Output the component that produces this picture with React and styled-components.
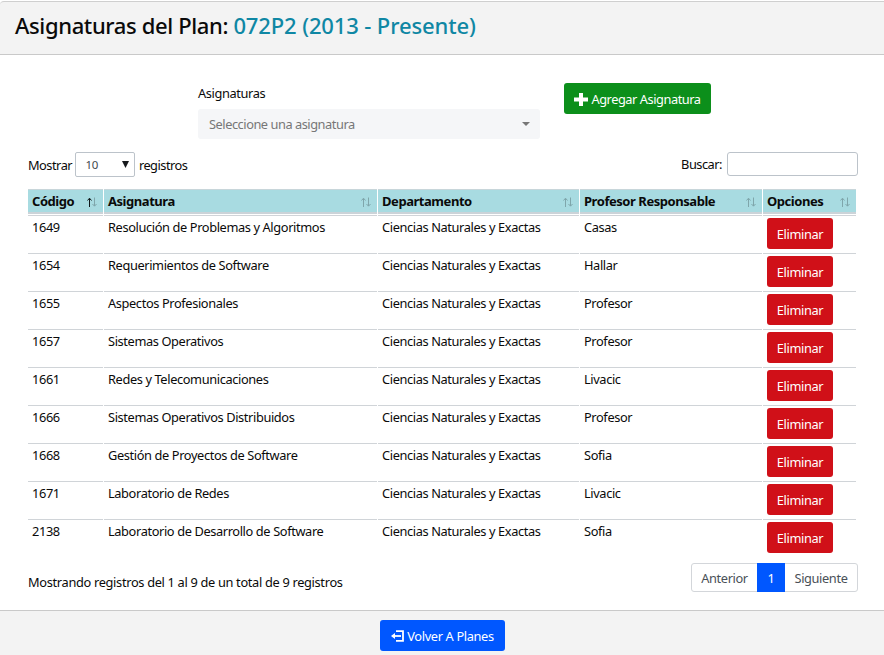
import React from "react";
import styled, { createGlobalStyle } from "styled-components";

const GlobalStyle = createGlobalStyle`
  *, *::before, *::after { box-sizing: border-box; }
  body {
    margin: 0;
    background: #fff;
    color: #0a0a0a;
    font-family: "Noto Sans", "Open Sans", sans-serif;
    font-size: 12.8px;
    line-height: 20px;
    letter-spacing: -0.38px;
  }
  button, input { font: inherit; letter-spacing: inherit; }
`;

const Card = styled.div`
  display: flex;
  flex-direction: column;
  height: 655px;
  padding-top: 1px;
  overflow: hidden;
`;

const CardHeader = styled.header`
  height: 54px;
  padding: 8px 0 0 15px;
  background: #f3f3f3;
  border-top: 1px solid #cfcfcf;
  border-bottom: 1px solid #c9c9c9;
  border-top-left-radius: 4px;
`;

const Title = styled.h1`
  margin: 0;
  font-size: 22px;
  line-height: 30px;
  font-weight: 500;
  letter-spacing: -0.37px;
  color: #0a0a0a;
  white-space: nowrap;
`;

const PlanName = styled.span`
  letter-spacing: -0.12px;
  color: #0f87a4;
`;

const CardBody = styled.main`
  height: 555px;
  padding: 28px 26px 0 28px;
`;

const AddForm = styled.div`
  display: flex;
  align-items: flex-start;
  gap: 24px;
  padding-left: 170px;
  height: 69px;
`;

const Field = styled.div`
  display: flex;
  flex-direction: column;
  gap: 6px;
  width: 342px;
`;

const SubjectSelect = styled.div`
  display: flex;
  align-items: center;
  justify-content: space-between;
  height: 30px;
  padding: 0 10px 0 11px;
  border-radius: 3px;
  background: #f5f6f8;
  color: #777;
  letter-spacing: -0.46px;
`;

const Button = styled.button`
  display: inline-flex;
  align-items: center;
  justify-content: center;
  gap: 3px;
  flex: none;
  width: ${(p) => p.$width}px;
  height: 31px;
  padding: 1px 0 0;
  border: 0;
  border-radius: 3px;
  background: ${(p) => p.$color};
  color: #fff;
  letter-spacing: ${(p) => p.$tracking || -0.35}px;
  white-space: nowrap;
`;

const Toolbar = styled.div`
  display: flex;
  justify-content: space-between;
  align-items: flex-start;
  height: 37px;
`;

const ToolLabel = styled.label`
  display: flex;
  align-items: center;
  gap: ${(p) => p.$gap || 4}px;
  height: ${(p) => p.$height}px;
  letter-spacing: -0.5px;
`;

const LengthSelect = styled.span`
  display: flex;
  align-items: center;
  justify-content: space-between;
  width: 60px;
  height: 25px;
  padding: 1px 5px 0 9px;
  border: 1px solid #bcc3ca;
  border-radius: 2px;
  color: #444a50;
  font-size: 11.5px;
  letter-spacing: -0.2px;

  svg {
    margin-bottom: 2px;
  }
`;

const SearchInput = styled.input`
  width: 131px;
  height: 24px;
  border: 1px solid #bcc3ca;
  border-radius: 3px;
  background: #fff;
  outline: none;
`;

const Table = styled.table`
  display: block;
  width: 828px;
`;

const TableHead = styled.thead`
  display: block;
  margin-bottom: 1px;
`;

const TableBody = styled.tbody`
  display: block;
`;

const Row = styled.tr`
  display: grid;
  grid-template-columns: 75px 273px 201px 182px 93px;
  column-gap: 1px;
`;

const HeadCell = styled.th`
  display: flex;
  align-items: center;
  justify-content: space-between;
  height: 25px;
  padding: 0 6px 0 4px;
  border-top: 1px solid #c8d6da;
  border-bottom: 2px solid #cbd3d8;
  background: #a8dbe1;
  font-size: 13px;
  font-weight: 700;
  letter-spacing: -0.45px;
  white-space: nowrap;

  svg {
    margin-top: 2px;
  }
`;

const Cell = styled.td`
  height: 38px;
  padding: ${(p) => (p.$action ? 2 : 1)}px 0 0 4px;
  border-top: 1px solid #d0d4d8;
  white-space: nowrap;
`;

const TableFooter = styled.div`
  display: flex;
  justify-content: space-between;
  padding-top: 6px;
`;

const Info = styled.div`
  padding-top: 9px;
  letter-spacing: -0.32px;
  white-space: nowrap;
`;

const Pagination = styled.nav`
  display: flex;
  width: 167px;
  height: 29px;
  border: 1px solid #d3d6da;
  border-radius: 3px;
`;

const Page = styled.a`
  display: flex;
  align-items: center;
  justify-content: center;
  width: ${(p) => p.$width}px;
  height: ${(p) => (p.$active ? 29 : 27)}px;
  margin-top: ${(p) => (p.$active ? -1 : 0)}px;
  padding-top: 1px;
  background: ${(p) => (p.$active ? "#0057ff" : "transparent")};
  color: ${(p) => (p.$active ? "#fff" : "#495057")};
`;

const CardFooter = styled.footer`
  display: flex;
  justify-content: center;
  height: 45px;
  padding: 9px 0 0 1px;
  border-top: 1px solid #c9c9c9;
  background: #f3f3f3;
`;

const SortIcon = ({ ascending }) => (
  <svg width="10" height="10" viewBox="0 0 10 10" fill="none" strokeWidth="1">
    <path d="M2.5 10V1.5M0.5 3.5L2.5 1.2L4.5 3.5" stroke={ascending ? "#10181a" : "#7fa6ab"} />
    <path d="M7.5 0.5V9M5.5 7L7.5 9.2L9.5 7" stroke="#7fa6ab" />
  </svg>
);

const PlusIcon = () => (
  <svg width="14" height="13" viewBox="0 0 14 13" fill="#fff">
    <path d="M5 0h4v4.5h5v4H9V13H5V8.5H0v-4h5z" />
  </svg>
);

const ExitIcon = () => (
  <svg width="13" height="12" viewBox="0 0 13 12" fill="none" stroke="#fff">
    <path d="M5 1.2H12V10.800H5" strokeWidth="1.8" />
    <path d="M2.5 6H10" strokeWidth="1.8" />
    <path d="M0 6L4 3v6z" fill="#fff" stroke="none" />
  </svg>
);

const Caret = ({ width, height, color }) => (
  <svg width={width} height={height} viewBox="0 0 8 8" preserveAspectRatio="none">
    <path d="M0 0h8L4 8z" fill={color} />
  </svg>
);

const columns = ["Código", "Asignatura", "Departamento", "Profesor Responsable", "Opciones"];
const department = "Ciencias Naturales y Exactas";
const subjects = [
  ["1649", "Resolución de Problemas y Algoritmos", "Casas"],
  ["1654", "Requerimientos de Software", "Hallar"],
  ["1655", "Aspectos Profesionales", "Profesor"],
  ["1657", "Sistemas Operativos", "Profesor"],
  ["1661", "Redes y Telecomunicaciones", "Livacic"],
  ["1666", "Sistemas Operativos Distribuidos", "Profesor"],
  ["1668", "Gestión de Proyectos de Software", "Sofia"],
  ["1671", "Laboratorio de Redes", "Livacic"],
  ["2138", "Laboratorio de Desarrollo de Software", "Sofia"],
];

export default function App() {
  return (
    <>
      <GlobalStyle />
      <Card>
        <CardHeader>
          <Title>
            Asignaturas del Plan: <PlanName>072P2 (2013 - Presente)</PlanName>
          </Title>
        </CardHeader>
        <CardBody>
          <AddForm>
            <Field>
              <label>Asignaturas</label>
              <SubjectSelect>
                Seleccione una asignatura
                <Caret width={8} height={4} color="#777" />
              </SubjectSelect>
            </Field>
            <Button $color="#0c8f1b" $width={147} $tracking={-0.45}>
              <PlusIcon />
              Agregar Asignatura
            </Button>
          </AddForm>
          <Toolbar>
            <ToolLabel $height={25} $gap={3.4}>
              Mostrar
              <LengthSelect>
                10
                <Caret width={7} height={7} color="#16191c" />
              </LengthSelect>
              registros
            </ToolLabel>
            <ToolLabel $gap={5} $height={24}>
              Buscar:
              <SearchInput />
            </ToolLabel>
          </Toolbar>
          <Table>
            <TableHead>
              <Row>
                {columns.map((name, i) => (
                  <HeadCell key={name}>
                    {name}
                    <SortIcon ascending={i === 0} />
                  </HeadCell>
                ))}
              </Row>
            </TableHead>
            <TableBody>
              {subjects.map(([code, name, teacher]) => (
                <Row key={code}>
                  <Cell>{code}</Cell>
                  <Cell>{name}</Cell>
                  <Cell>{department}</Cell>
                  <Cell>{teacher}</Cell>
                  <Cell $action>
                    <Button $color="#d01018" $width={66}>Eliminar</Button>
                  </Cell>
                </Row>
              ))}
            </TableBody>
          </Table>
          <TableFooter>
            <Info>Mostrando registros del 1 al 9 de un total de 9 registros</Info>
            <Pagination>
              <Page $width={65}>Anterior</Page>
              <Page $width={28} $active>1</Page>
              <Page $width={72}>Siguiente</Page>
            </Pagination>
          </TableFooter>
        </CardBody>
        <CardFooter>
          <Button $color="#0057ff" $width={125}>
            <ExitIcon />
            Volver A Planes
          </Button>
        </CardFooter>
      </Card>
    </>
  );
}
